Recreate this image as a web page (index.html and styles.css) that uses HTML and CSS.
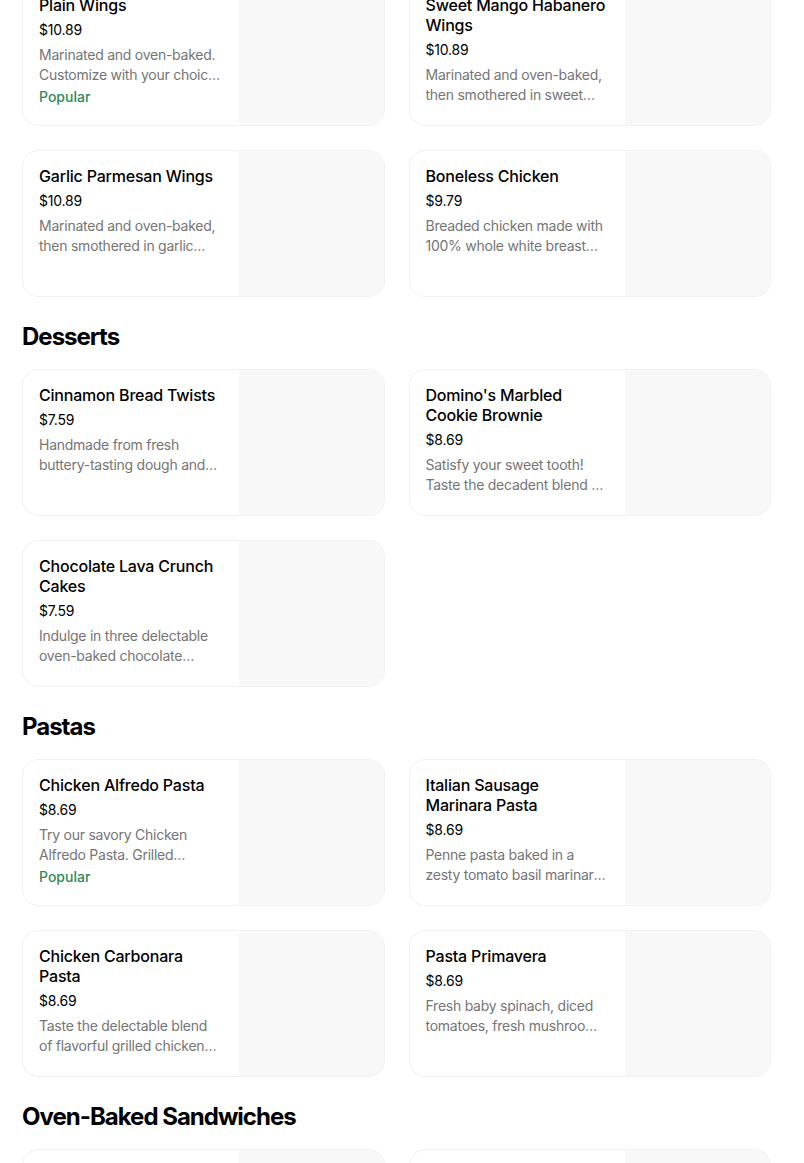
FILE: index.html
```html
<!DOCTYPE html>
<html lang="en">
<head>
<meta charset="utf-8">
<title>Menu</title>
<link rel="stylesheet" href="styles.css">
</head>
<body>
<main class="menu">
  <section class="section section-first">
    <div class="grid">
      <div class="card">
        <div class="info">
          <div class="title">Plain Wings</div>
          <div class="price">$10.89</div>
          <div class="desc">Marinated and oven-baked. Customize with your choice of dipping sauce.</div>
          <div class="popular">Popular</div>
        </div>
        <div class="pic"></div>
      </div>
      <div class="card">
        <div class="info">
          <div class="title">Sweet Mango Habanero Wings</div>
          <div class="price">$10.89</div>
          <div class="desc">Marinated and oven-baked, then smothered in sweet mango habanero sauce.</div>
        </div>
        <div class="pic"></div>
      </div>
      <div class="card">
        <div class="info">
          <div class="title">Garlic Parmesan Wings</div>
          <div class="price">$10.89</div>
          <div class="desc">Marinated and oven-baked, then smothered in garlic parmesan sauce.</div>
        </div>
        <div class="pic"></div>
      </div>
      <div class="card">
        <div class="info">
          <div class="title">Boneless Chicken</div>
          <div class="price">$9.79</div>
          <div class="desc">Breaded chicken made with 100% whole white breast meat. Customize with your choice of dipping sauce.</div>
        </div>
        <div class="pic"></div>
      </div>
    </div>
  </section>

  <section class="section">
    <h2 class="heading">Desserts</h2>
    <div class="grid">
      <div class="card">
        <div class="info">
          <div class="title">Cinnamon Bread Twists</div>
          <div class="price">$7.59</div>
          <div class="desc">Handmade from fresh buttery-tasting dough and baked to a golden brown.</div>
        </div>
        <div class="pic"></div>
      </div>
      <div class="card">
        <div class="info">
          <div class="title">Domino's Marbled Cookie Brownie</div>
          <div class="price">$8.69</div>
          <div class="desc">Satisfy your sweet tooth! Taste the decadent blend of gooey milk chocolate chunk cookie and delicious fudge brownie.</div>
        </div>
        <div class="pic"></div>
      </div>
      <div class="card">
        <div class="info">
          <div class="title">Chocolate Lava Crunch Cakes</div>
          <div class="price">$7.59</div>
          <div class="desc">Indulge in three delectable oven-baked chocolate cakes with a crunchy outside.</div>
        </div>
        <div class="pic"></div>
      </div>
    </div>
  </section>

  <section class="section">
    <h2 class="heading">Pastas</h2>
    <div class="grid">
      <div class="card">
        <div class="info">
          <div class="title">Chicken Alfredo Pasta</div>
          <div class="price">$8.69</div>
          <div class="desc">Try our savory Chicken Alfredo Pasta. Grilled chicken breast and creamy Alfredo sauce.</div>
          <div class="popular">Popular</div>
        </div>
        <div class="pic"></div>
      </div>
      <div class="card">
        <div class="info">
          <div class="title">Italian Sausage Marinara Pasta</div>
          <div class="price">$8.69</div>
          <div class="desc">Penne pasta baked in a zesty tomato basil marinara sauce with Italian sausage.</div>
        </div>
        <div class="pic"></div>
      </div>
      <div class="card">
        <div class="info">
          <div class="title">Chicken Carbonara Pasta</div>
          <div class="price">$8.69</div>
          <div class="desc">Taste the delectable blend of flavorful grilled chicken breast, smoked bacon and onions.</div>
        </div>
        <div class="pic"></div>
      </div>
      <div class="card">
        <div class="info">
          <div class="title">Pasta Primavera</div>
          <div class="price">$8.69</div>
          <div class="desc">Fresh baby spinach, diced tomatoes, fresh mushrooms and onions in a creamy sauce.</div>
        </div>
        <div class="pic"></div>
      </div>
    </div>
  </section>

  <section class="section">
    <h2 class="heading">Oven-Baked Sandwiches</h2>
    <div class="grid">
      <div class="card">
        <div class="info">
          <div class="title">Chicken Parm Sandwich</div>
          <div class="price">$8.69</div>
          <div class="desc">Grilled chicken breast, tomato basil marinara, parmesan and provolone cheese.</div>
        </div>
        <div class="pic"></div>
      </div>
      <div class="card">
        <div class="info">
          <div class="title">Italian Sandwich</div>
          <div class="price">$8.69</div>
          <div class="desc">Pepperoni, salami, ham, banana peppers, onions and provolone cheese.</div>
        </div>
        <div class="pic"></div>
      </div>
    </div>
  </section>
</main>
</body>
</html>
```

FILE: styles.css
```css
* { box-sizing: border-box; }

html, body {
  margin: 0;
  padding: 0;
  background: #ffffff;
}

body {
  font-family: Inter, "Liberation Sans", Arial, sans-serif;
  color: #000000;
  overflow: hidden;
}

.menu {
  width: 749px;
  margin-left: 22px;
}

.section-first {
  margin-top: -21px;
}

.heading {
  margin: 24px 0 16px;
  font-size: 24px;
  line-height: 32px;
  font-weight: 700;
  letter-spacing: -1px;
}

.grid {
  display: grid;
  grid-template-columns: 1fr 1fr;
  gap: 24px;
}

.card {
  display: flex;
  height: 147px;
  border: 1px solid #f1f1f1;
  border-radius: 16px;
  overflow: hidden;
  background: #ffffff;
}

.info {
  flex: 1;
  min-width: 0;
  padding: 15px 16px 16px;
}

.pic {
  flex: 0 0 145px;
  background: #f8f8f8;
}

.title {
  font-size: 16px;
  line-height: 20px;
  font-weight: 500;
  letter-spacing: -0.2px;
}

.price {
  margin-top: 5px;
  font-size: 14px;
  line-height: 20px;
  letter-spacing: -0.2px;
}

.desc {
  margin-top: 5px;
  font-size: 14px;
  line-height: 20px;
  color: #757575;
  letter-spacing: -0.25px;
  display: -webkit-box;
  -webkit-box-orient: vertical;
  -webkit-line-clamp: 2;
  overflow: hidden;
}

.popular {
  margin-top: 2px;
  font-size: 14px;
  line-height: 20px;
  font-weight: 500;
  color: #2f8a55;
}
```
